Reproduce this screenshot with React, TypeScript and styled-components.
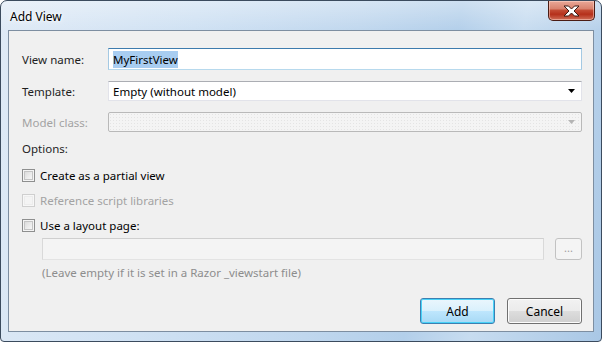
import React from 'react';
import styled, { createGlobalStyle } from 'styled-components';

const GlobalStyle = createGlobalStyle`
  html, body {
    margin: 0;
    padding: 0;
    background: #ffffff;
  }
  body {
    font-family: "Noto Sans", "Open Sans", sans-serif;
    font-size: 11.5px;
    color: #1e1e1e;
  }
`;

const ComboArrow = ({ disabled }: { disabled?: boolean }) => (
  <svg width="7" height="4" viewBox="0 0 7 4">
    <path d="M0 0 H7 L3.5 4 Z" fill={disabled ? '#b4b4b4' : '#000'} />
  </svg>
);

const CloseGlyph = () => (
  <svg width="17" height="12" viewBox="0 0 17 12">
    <path
      d="M1 1 H5.5 L8.5 4 L11.5 1 H16 L11 6 L16 11 H11.5 L8.5 8 L5.5 11 H1 L6 6 Z"
      fill="#ffffff"
      stroke="#3a1a14"
      strokeWidth="1"
      strokeLinejoin="round"
    />
  </svg>
);

const App = () => {
  return (
    <>
      <GlobalStyle />
      <Window>
        <TitleBar>
          <Title>Add View</Title>
          <CloseButton aria-label="Close">
            <CloseGlyph />
          </CloseButton>
        </TitleBar>
        <Client>
          <FieldGrid>
            <Label>View name:</Label>
            <TextBox $focused>
              <Selected>MyFirstView</Selected>
            </TextBox>
            <Label>Template:</Label>
            <Combo>
              <span>Empty (without model)</span>
              <ComboArrow />
            </Combo>
            <Label $disabled>Model class:</Label>
            <Combo $disabled>
              <span />
              <ComboArrow disabled />
            </Combo>
          </FieldGrid>

          <SectionLabel>Options:</SectionLabel>
          <CheckList>
            <CheckRow>
              <CheckBox />
              <span>Create as a partial view</span>
            </CheckRow>
            <CheckRow $disabled>
              <CheckBox $disabled />
              <span>Reference script libraries</span>
            </CheckRow>
            <CheckRow>
              <CheckBox />
              <span>Use a layout page:</span>
            </CheckRow>
          </CheckList>

          <LayoutRow>
            <TextBox $disabled />
            <BrowseButton disabled>...</BrowseButton>
          </LayoutRow>
          <Hint>(Leave empty if it is set in a Razor _viewstart file)</Hint>

          <ButtonRow>
            <DialogButton $default>Add</DialogButton>
            <DialogButton>Cancel</DialogButton>
          </ButtonRow>
        </Client>
      </Window>
    </>
  );
};

export default App;

const Window = styled.div`
  width: 602px;
  height: 342px;
  box-sizing: border-box;
  display: flex;
  flex-direction: column;
  border: 1px solid #3b4b5e;
  border-radius: 7px 7px 4px 4px;
  background:
    linear-gradient(180deg, rgba(255, 255, 255, 0.35) 0%, rgba(255, 255, 255, 0) 30px),
    linear-gradient(100deg, #dfeaf6 0%, #cfe1f3 30%, #c0d7ee 55%, #b3cfea 70%, #c7dcf0 80%, #a9c7e5 100%);
  overflow: hidden;
`;

const TitleBar = styled.div`
  height: 29px;
  display: flex;
  align-items: flex-start;
  padding-left: 9px;
`;

const Title = styled.div`
  margin-top: 7px;
  font-size: 12px;
  color: #000;
  text-shadow: 0 0 6px #ffffff, 0 0 3px #ffffff;
`;

const CloseButton = styled.button`
  margin-left: auto;
  margin-right: 6px;
  width: 47px;
  height: 20px;
  padding: 0;
  border: 1px solid #4a1c14;
  border-top: none;
  border-radius: 0 0 5px 5px;
  display: flex;
  align-items: center;
  justify-content: center;
  background: linear-gradient(
    180deg,
    #e9a898 0%,
    #d9836f 40%,
    #c24a33 50%,
    #b5301b 70%,
    #cf6e58 100%
  );
  box-shadow: inset 0 0 0 1px rgba(255, 220, 210, 0.5);
`;

const Client = styled.div`
  flex: 1;
  margin: 0 7px 9px 7px;
  border: 1px solid #7d8ea1;
  background: #f0f0f0;
  padding: 17px 11px 0 13px;
  display: flex;
  flex-direction: column;
`;

const FieldGrid = styled.div`
  display: grid;
  grid-template-columns: 86px 1fr;
  row-gap: 11px;
  align-items: center;
`;

const Label = styled.div<{ $disabled?: boolean }>`
  color: ${(p) => (p.$disabled ? '#a3a3a3' : '#1e1e1e')};
  white-space: nowrap;
`;

const TextBox = styled.div<{ $focused?: boolean; $disabled?: boolean }>`
  box-sizing: border-box;
  height: 22px;
  display: flex;
  align-items: center;
  padding-left: 4px;
  background: ${(p) => (p.$disabled ? '#f4f4f4' : '#ffffff')};
  border: 1px solid ${(p) => (p.$focused ? '#a4c9e3' : '#d9d9d9')};
  border-top-color: ${(p) => (p.$focused ? '#3d7bad' : p.$disabled ? '#cfcfcf' : '#abadb3')};
  border-bottom-color: ${(p) => (p.$focused ? '#b7d9ed' : '#e3e3e3')};
`;

const Selected = styled.span`
  background: #a8cdf1;
  color: #000;
  line-height: 17px;
`;

const Combo = styled.div<{ $disabled?: boolean }>`
  box-sizing: border-box;
  height: 20px;
  display: flex;
  align-items: center;
  justify-content: space-between;
  padding: 0 6px 0 4px;
  color: #000;
  background: ${(p) =>
    p.$disabled
      ? 'radial-gradient(circle, #e4e4e4 0.6px, transparent 0.8px) 0 0 / 3px 3px, #f4f4f4'
      : '#ffffff'};
  border: 1px solid ${(p) => (p.$disabled ? '#b9b9b9' : '#e2e3ea')};
  border-top-color: ${(p) => (p.$disabled ? '#b9b9b9' : '#abadb3')};
  border-radius: ${(p) => (p.$disabled ? '2px' : '0')};
`;

const SectionLabel = styled.div`
  margin-top: 9px;
  line-height: 16px;
`;

const CheckList = styled.div`
  margin-top: 6px;
  display: flex;
  flex-direction: column;
`;

const CheckRow = styled.label<{ $disabled?: boolean }>`
  height: 25px;
  display: flex;
  align-items: center;
  gap: 5px;
  color: ${(p) => (p.$disabled ? '#a3a3a3' : '#000')};
`;

const CheckBox = styled.span<{ $disabled?: boolean }>`
  box-sizing: border-box;
  width: 13px;
  height: 13px;
  border: 1px solid ${(p) => (p.$disabled ? '#cfcfcf' : '#8e8f8f')};
  background: ${(p) =>
    p.$disabled
      ? '#f4f4f4'
      : 'linear-gradient(135deg, #d4d4d4 0%, #eeeeee 60%, #fafafa 100%)'};
  box-shadow: inset 0 0 0 1px ${(p) => (p.$disabled ? '#f7f7f7' : '#f4f4f4')},
    inset 0 0 0 2px ${(p) => (p.$disabled ? '#ececec' : '#c4c4c4')};
`;

const LayoutRow = styled.div`
  margin-left: 20px;
  display: flex;
  gap: 11px;
  > div {
    flex: 1;
  }
`;

const BrowseButton = styled.button`
  box-sizing: border-box;
  width: 27px;
  height: 22px;
  padding: 0 0 3px 0;
  border: 1px solid #c2c2c2;
  border-radius: 3px;
  background: #f4f4f4;
  color: #a0a0a0;
  font-family: inherit;
  font-size: 11px;
`;

const Hint = styled.div`
  margin: 5px 0 0 20px;
  line-height: 16px;
  color: #8d8d8d;
`;

const ButtonRow = styled.div`
  margin-top: 17px;
  display: flex;
  justify-content: flex-end;
  gap: 12px;
`;

const DialogButton = styled.button<{ $default?: boolean }>`
  box-sizing: border-box;
  width: 75px;
  height: 26px;
  border-radius: 3px;
  font-family: inherit;
  font-size: 12px;
  color: #000;
  border: 1px solid ${(p) => (p.$default ? '#3c7fb1' : '#707070')};
  background: ${(p) =>
    p.$default
      ? 'linear-gradient(180deg, #eaf6fd 0%, #d9f0fc 50%, #bee6fd 51%, #a7d9f5 100%)'
      : 'linear-gradient(180deg, #f2f2f2 0%, #ebebeb 50%, #dddddd 51%, #cfcfcf 100%)'};
  box-shadow: inset 0 0 0 1px ${(p) => (p.$default ? '#48d2f8' : '#fcfcfc')};
`;
